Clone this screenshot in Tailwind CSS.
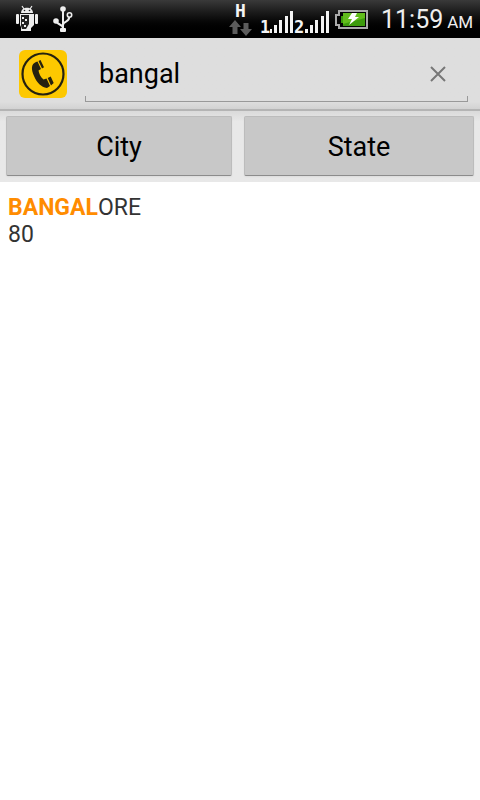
<!DOCTYPE html>
<html lang="en">
<head>
  <meta charset="UTF-8">
  <meta name="viewport" content="width=device-width, initial-scale=1.0">
  <title>City search</title>
  <script src="https://cdn.jsdelivr.net/npm/@tailwindcss/browser@4"></script>
</head>
<body class="bg-white font-['Roboto',sans-serif] text-black min-h-screen">

  <!-- Status bar -->
  <div class="flex items-center justify-between h-[38px] pl-4 pr-2.5 bg-linear-to-b from-[#3a3a3a] to-black to-90% text-white">
    <div class="flex items-center gap-3.5">
      <svg class="w-[22px] h-[38px]" viewBox="0 0 22 38" fill="#eee">
        <path d="M6 6l2 3M16 6l-2 3" stroke="#eee" stroke-width="1.2"/>
        <path d="M5 13c0-7 12-7 12 0z"/>
        <rect x="0" y="14" width="3" height="10" rx="1"/>
        <rect x="19" y="14" width="3" height="10" rx="1"/>
        <path d="M4 14h14v11l-3 3v3H5v-4l-1-2z"/>
        <path d="M5 15h8v9l-3 5H6l-1-3z" fill="#222"/>
        <path d="M6 17h2v2H6zM9 19h2v2H9zM6 22h2v2H6zM8 25h2v2H8z"/>
        <circle cx="8.500" cy="10.500" r=".8" fill="#222"/>
        <circle cx="13.500" cy="10.500" r=".8" fill="#222"/>
      </svg>
      <svg class="w-[22px] h-[38px]" viewBox="0 0 22 38" fill="none" stroke="#eee" stroke-width="2">
        <path d="M11 8v22M11 28c0-4-7-3-7-8M11 25c0-4 7-3 6-8"/>
        <circle cx="11" cy="9" r="2.800" fill="#eee" stroke="none"/>
        <circle cx="4" cy="21" r="2.800" fill="#eee" stroke="none"/>
        <circle cx="17.500" cy="15" r="2.200" stroke-width="1.600"/>
        <rect x="8" y="28" width="6" height="4" rx="1" fill="#eee" stroke="none"/>
      </svg>
    </div>

    <div class="flex items-center">
      <!-- Data connection, both SIM signals and battery -->
      <svg class="w-[140px] h-[38px] mr-3" viewBox="0 0 140 38" fill="#f4f4f4" font-family="DejaVu Sans Mono, monospace" font-weight="bold">
        <text x="6" y="17" font-size="18">H</text>
        <path d="M6 20l6 7H8.500v7h-5v-7H0zM17 36l-6-7h3.500v-6h5v6H23z" fill="#5c5c5c"/>
        <text x="31" y="33" font-size="17">1</text>
        <path d="M41 29h2v4h-2zM45 25h3v8h-3zM50 20h3v13h-3zM56 16h3v17h-3zM61 11h3v22h-3z"/>
        <text x="65" y="33" font-size="17">2</text>
        <path d="M76 29h3v4h-3zM81 25h3v8h-3zM86 20h3v13h-3zM92 16h3v17h-3zM97 11h3v22h-3z"/>
        <path d="M110 11h28v17h-28v-3h-3v-10h3z" fill="#050505" stroke="#aaa" stroke-width="2"/>
        <path d="M114 13h22v13h-22v-3h-2v-7h2z" fill="#3c9b0c"/>
        <path d="M114 13h22v5l-22 6z" fill="#62bd1c"/>
        <path d="M123 13l5 0-2 4h4l-10 8 3-6h-4z" fill="#fff"/>
      </svg>
      <div class="w-[89px] flex items-baseline gap-1 pt-1 whitespace-nowrap text-[#eee]">
        <span class="text-[25px] leading-8">11:59</span>
        <span class="text-[17px] leading-8">AM</span>
      </div>
    </div>
  </div>

  <!-- Search bar -->
  <header class="flex items-center h-[73px] pl-[19px] pr-3 gap-[18px] bg-linear-to-b from-[#dedede] from-90% to-[#d2d2d2] border-b-2 border-[#b4b4b4]">
    <svg class="w-12 h-12 shrink-0" viewBox="0 0 48 48">
      <rect width="48" height="48" rx="6" fill="#fdc800"/>
      <circle cx="24" cy="24" r="20.500" fill="none" stroke="#25220f" stroke-width="2.200"/>
      <path d="M17 12C12 14 12 19 15 26C18 33 22 37 28 38L31 36L27.500 28.500L24.500 29.500C21.500 27 20 23.500 19.500 20.500L22 19L18.500 11.500z" fill="#25220f"/>
      <path d="M19.500 11l2-1 3.500 7.200-2 1.200zM28.700 28l3-1.500 3 6.500-2.700 2.500z" fill="#25220f"/>
    </svg>
    <form class="relative flex flex-1 self-stretch items-center min-w-0 pl-3.5 pr-4">
      <input type="text" aria-label="Search city" value="bangal" class="flex-1 min-w-0 h-12 text-[27px] bg-transparent outline-none">
      <button type="reset" aria-label="Clear" class="flex items-center justify-center w-7 h-12">
        <svg class="w-4 h-4" viewBox="0 0 16 16" stroke="#777" stroke-width="2"><path d="M1 1l14 14M15 1L1 15"/></svg>
      </button>
      <div class="absolute inset-x-0 bottom-[7px] h-1.5 border border-t-0 border-[#999]"></div>
    </form>
  </header>

  <!-- Filter buttons -->
  <div class="flex gap-3 h-[71px] px-1.5 pt-[5px] pb-1.5 bg-linear-to-b from-[#dadada] to-[#e8e8e8] to-15%">
    <button type="button" class="w-[226px] grow pt-0.5 rounded-xs bg-[#c8c8c8] border border-[#bcbcbc] border-b-[#8c8c8c] shadow-xs text-[27px]">City</button>
    <button type="button" class="w-[230px] grow pt-0.5 rounded-xs bg-[#c8c8c8] border border-[#bcbcbc] border-b-[#8c8c8c] shadow-xs text-[27px]">State</button>
  </div>

  <!-- Results -->
  <main class="px-2 pt-3 text-[23px] leading-[27px] text-[#333]">
    <p><b class="font-bold text-[#ff8c00]">BANGAL</b>ORE</p>
    <p>80</p>
  </main>

</body>
</html>
